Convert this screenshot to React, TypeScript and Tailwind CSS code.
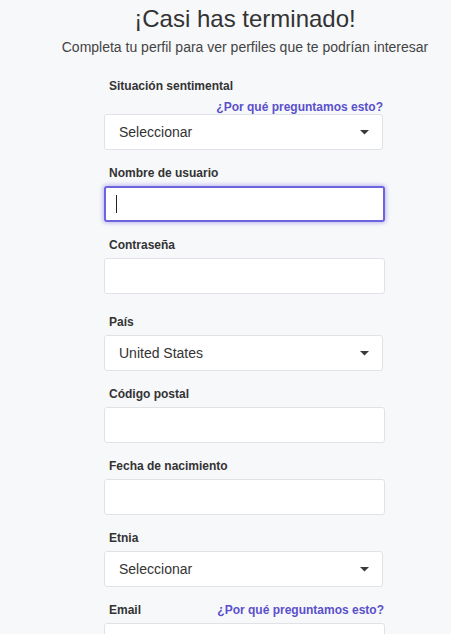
const LINK = '¿Por qué preguntamos esto?'

function Caret() {
  return (
    <svg width="9" height="5" viewBox="0 0 9 5" className="shrink-0">
      <path d="M0 0 L9 0 L4.5 4.5 Z" fill="#3a3a3a" />
    </svg>
  )
}

function Label({ children, link }: { children: string; link?: boolean }) {
  return (
    <div className="mb-[5px] flex h-[17px] items-center justify-between pl-[5px] pr-px">
      <span className="text-[12px] font-bold text-[#333]">{children}</span>
      {link && <span className="text-[12px] font-bold text-[#5a50cc]">{LINK}</span>}
    </div>
  )
}

function SelectBox({ value }: { value: string }) {
  return (
    <div className="flex h-[36px] w-[279px] items-center justify-between rounded-[3px] border border-[#e1e2e6] bg-white pl-[14px] pr-[13px] text-[14px] text-[#333]">
      <span>{value}</span>
      <Caret />
    </div>
  )
}

function TextBox({ focused }: { focused?: boolean }) {
  if (focused) {
    return (
      <div className="flex h-[36px] items-center rounded-[3px] border-2 border-[#6d63dc] bg-white pl-[10px] shadow-[0_0_4px_1px_rgba(109,99,220,0.45)]">
        <span className="h-[18px] w-px bg-[#222]" />
      </div>
    )
  }
  return <div className="h-[36px] rounded-[3px] border border-[#e1e2e6] bg-white" />
}

function Field({ label, link, children, extra }: { label: string; link?: boolean; children: React.ReactNode; extra?: string }) {
  return (
    <div className={extra ?? 'mb-[14px]'}>
      <Label link={link}>{label}</Label>
      {children}
    </div>
  )
}

export default function App() {
  return (
    <div className="min-h-[634px] w-full overflow-hidden bg-[#f7f8fa] font-['Liberation_Sans',Arial,sans-serif]">
      <div className="flex flex-col items-center pl-[39px] pt-[3px]">
        <h1 className="text-[24px] leading-[32px] text-[#333]">¡Casi has terminado!</h1>
        <p className="mt-[2px] text-[14px] leading-[20px] text-[#444]">
          Completa tu perfil para ver perfiles que te podrían interesar
        </p>
      </div>

      <div className="ml-[104px] mt-[21px] w-[281px]">
        <div className="pl-[5px] text-[12px] font-bold leading-[17px] text-[#333]">Situación sentimental</div>
        <div className="mt-[5px] flex h-[14px] items-center justify-end pr-[2px] text-[12px] font-bold text-[#5a50cc]">
          {LINK}
        </div>
        <div className="mb-[14px]">
          <SelectBox value="Seleccionar" />
        </div>

        <Field label="Nombre de usuario">
          <TextBox focused />
        </Field>
        <Field label="Contraseña" extra="mb-[19px]">
          <TextBox />
        </Field>
        <Field label="País">
          <SelectBox value="United States" />
        </Field>
        <Field label="Código postal">
          <TextBox />
        </Field>
        <Field label="Fecha de nacimiento">
          <TextBox />
        </Field>
        <Field label="Etnia">
          <SelectBox value="Seleccionar" />
        </Field>
        <Field label="Email" link>
          <TextBox />
        </Field>
      </div>
    </div>
  )
}
